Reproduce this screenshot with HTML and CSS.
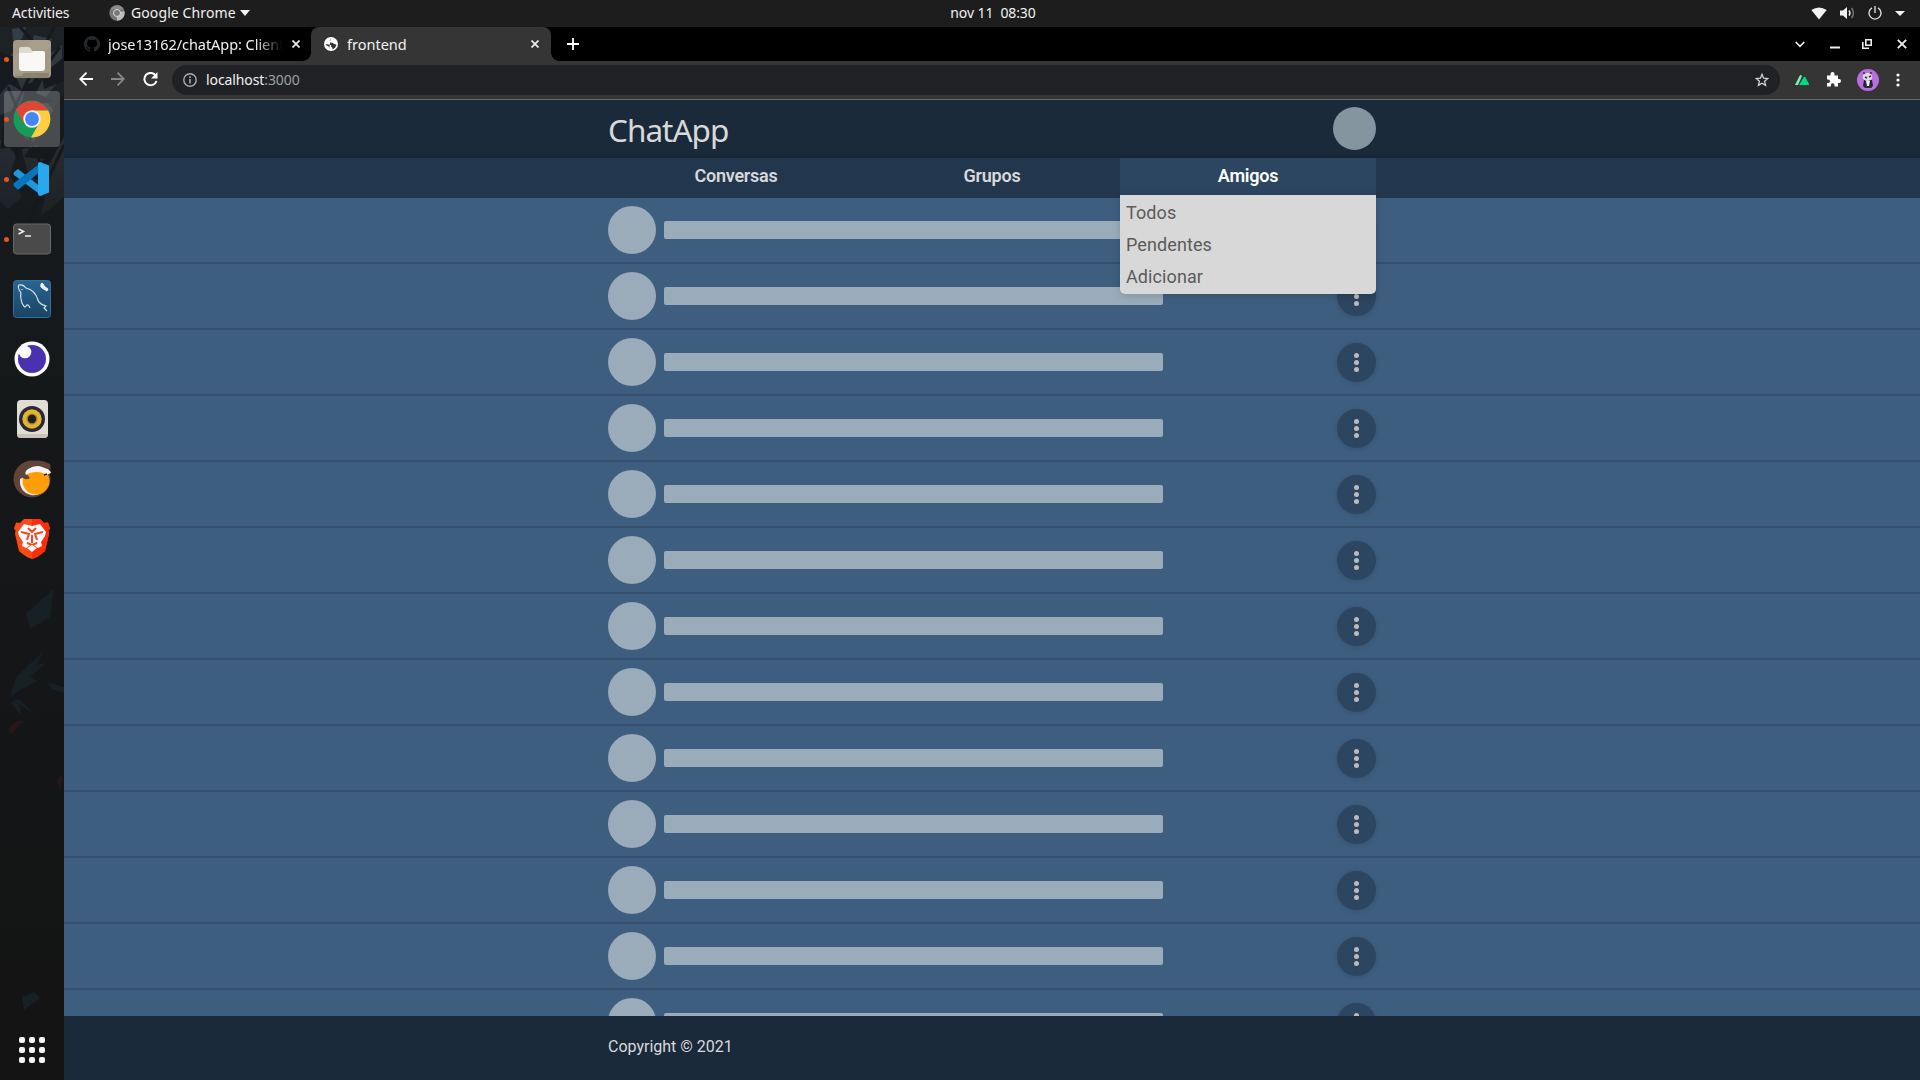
FILE: index.html
```html
<!DOCTYPE html>
<html lang="pt">
<head>
<meta charset="utf-8">
<title>frontend</title>
<link rel="stylesheet" href="styles.css">
</head>
<body>
<header class="panel">
  <span class="activities">Activities</span>
  <svg class="panel-app" width="16" height="16" viewBox="0 0 16 16"><circle cx="8" cy="8" r="7.7" fill="#777"/><path d="M8 8 15.3 6A7.7 7.7 0 0 1 8 15.7Z" fill="#bdbdbd"/><path d="M1.4 4.2A7.7 7.7 0 0 1 15 4.6H8Z" fill="#8c8c8c"/><circle cx="8" cy="8" r="3.5" fill="#777" stroke="#ddd"/></svg>
  <span class="app-name">Google Chrome</span>
  <svg class="app-arrow" width="10" height="6" viewBox="0 0 10 6"><path d="M0 0h10L5 6z" fill="#f2f2f2"/></svg>
  <span class="clock">nov 11&nbsp; 08:30</span>
  <div class="tray">
    <svg width="16" height="13" viewBox="0 0 16 13"><path d="M.3 3Q8-2 15.700 3L8 12.500Z" fill="#f2f2f2"/></svg>
    <svg width="15" height="14" viewBox="0 0 15 14"><path d="M0 4.500h3L7 1v12L3 9.500H0z" fill="#f2f2f2"/><path d="M9 4.500q2 2.500 0 5" fill="none" stroke="#f2f2f2" stroke-width="1.400"/><path d="M11.500 2q3.800 5 0 10" fill="none" stroke="#777" stroke-width="1.400"/></svg>
    <svg width="14" height="14" viewBox="0 0 14 14"><path d="M4 1.900a6 6 0 1 0 6 0M7 0v7" fill="none" stroke="#e6e6e6" stroke-width="1.300"/></svg>
    <svg width="10" height="5" viewBox="0 0 10 5"><path d="M0 0h10L5 5z" fill="#f2f2f2"/></svg>
  </div>
</header>
<div class="desktop">
  <aside class="dock">
    <svg class="wallpaper" width="64" height="1053" viewBox="0 0 64 1053">
      <defs><linearGradient id="shade" x1="0" y1="0" x2="0" y2="1"><stop offset="0" stop-color="#151719" stop-opacity="0"/><stop offset=".18" stop-color="#151719" stop-opacity=".75"/><stop offset=".4" stop-color="#141617" stop-opacity=".9"/><stop offset="1" stop-color="#141414"/></linearGradient></defs>
      <path fill="#1c2226" d="M0 0h64v1053H0z"/>
      <path fill="#343e46" d="M12 2l14-2-4 12-9 4zM34 8l18 4-6 18 16-12v32L44 72l12 14-20 16 22-2-8 30 14-22v62l-24 20 10-38-18 10L18 108l-12 8 10-34L0 88V66l18-16-14-8 8-16 14 10zM0 112l16 16-6 20 12 22-14 12-8-8z"/>
      <path fill="#171b1f" d="M0 24q14 10 24 0l-8 16 14 4-14 6 6 14-14-8-8 12zM64 30L42 48l2 14 20-8zM26 58l18-8-8 16 18 8-18 4-2 18-8-14-14 4 10-12zM4 94l14-8 0 12 14-2-8 14 14 10-16 2-4 14-6-16-12 2zM64 66L24 130l20 2-16 16 12 6 24-44z"/>
      <path stroke="#171b1f" stroke-width="3" fill="none" d="M54 0L2 106M60 20L32 58M8 60l34 80M64 118L28 196M20 0l20 22"/>
      <path fill="url(#shade)" d="M0 0h64v1053H0z"/>
      <path fill="#172024" d="M44 624L16 650l-6 20 12-8 16-8-8-4 16-14-10 2zM10 675l12 14-3-12 16 11-16-16zM64 660l-18-5 6 7 12 4zM26 586l28-24-4 28-20 12zM22 970l12-5 6 6-16 12z"/>
      <path fill="#281619" d="M8 703l8-9 7 0-11 13zM57 754l5-8-1 18z"/>
    </svg>
    <div class="apps">
      <div class="app running">
        <svg width="38" height="38" viewBox="0 0 38 38"><rect width="38" height="38" rx="4" fill="#a39a86"/><path d="M2 33h34v2q0 3-3 3H5q-3 0-3-3z" fill="#8b836f"/><path d="M18 0h16q4 0 4 4v2L8 36H4q-4 0-4-4V18z" fill="#aaa18d" opacity=".7"/><path d="M6 13V9q0-2 2-2h7q2 0 3 2l1 2h8v4H6z" fill="#e0dad0"/><path d="M6 13h12l3-2h9q2 0 2 2v15q0 3-3 3H9q-3 0-3-3z" fill="#f9f8f6"/></svg>
      </div>
      <div class="app running focused">
        <svg width="38" height="38" viewBox="0 0 38 38"><circle cx="19" cy="19" r="18.500" fill="#149d58"/><path d="M3 9.800A18.500 18.500 0 0 1 35 10.500H19L11 24z" fill="#de4638"/><path d="M19 10.500h16.200A18.500 18.500 0 0 1 18 37.500l8-14z" fill="#ffcd42"/><circle cx="19" cy="19" r="8.700" fill="#f1f1f1"/><circle cx="19" cy="19" r="6.900" fill="#4487f4"/></svg>
      </div>
      <div class="app running">
        <svg width="38" height="38" viewBox="0 0 38 38"><path d="M1 12l4-3 24 19v8L1 15q-1-2 0-3z" fill="#2196df"/><path d="M1 26l4 4 24-20V2L1 23q-1 2 0 3z" fill="#0875bd"/><path d="M27 2l9 3.500v27L27 36q-2 0-2-2V4q0-2 2-2z" fill="#29a8ef"/></svg>
      </div>
      <div class="app running">
        <svg width="38" height="32" viewBox="0 0 38 32"><rect x=".5" y="1" width="37" height="30" rx="3" fill="#4a4a4a" stroke="#696969"/><path d="M5.500 6l5 2.500-5 2.500M12 13h6" fill="none" stroke="#eee" stroke-width="1.500"/></svg>
      </div>
      <div class="app">
        <svg width="38" height="38" viewBox="0 0 38 38"><defs><linearGradient id="sea" x1="0" y1="0" x2="0" y2="1"><stop stop-color="#286692"/><stop offset="1" stop-color="#1b4363"/></linearGradient></defs><rect x=".5" y=".5" width="37" height="37" rx="3" fill="url(#sea)" stroke="#34719b"/><path d="M17 28q-2-5-4-2-1 3-4-3-2-6-1-10-4-6-2-8 4-1 7 3 9 2 12 12 1 4 8 6l-2 2 3 3M9 9v1" fill="none" stroke="#d4e4ee" stroke-width="1.200"/><path d="M28 4q-1 3 1 4l5 3 1-2-4-3q0-2-2-3z" fill="#e8eef2" stroke="#e8eef2"/></svg>
      </div>
      <div class="app">
        <svg width="38" height="38" viewBox="0 0 38 38"><circle cx="19" cy="19" r="17.500" fill="#fff"/><circle cx="19" cy="19" r="14" fill="#4a31b0"/><circle cx="12" cy="12" r="6.300" fill="#fff"/></svg>
      </div>
      <div class="app">
        <svg width="38" height="38" viewBox="0 0 38 38"><rect x="4" y="0" width="31" height="38" rx="4" fill="#e2ddd4"/><path d="M4 34h31q0 4-4 4H8q-4 0-4-4z" fill="#c8c2b8"/><circle cx="19" cy="19" r="13" fill="#28283a"/><circle cx="19" cy="19" r="9.700" fill="#e3b42c"/><circle cx="19" cy="19" r="5.500" fill="#a88324"/><circle cx="19" cy="19" r="4.200" fill="#1c1e25"/></svg>
      </div>
      <div class="app">
        <svg width="38" height="38" viewBox="0 0 38 38"><circle cx="19" cy="19" r="18.500" fill="#614439"/><path d="M11 17L7 19q-1 13 11 16 10 1 15-6z" fill="#eee"/><circle cx="23" cy="21" r="13.500" fill="#ff9d08"/><path d="M4 12Q20-6 37 4l1 8-11-3-14 4 4 5q-4 3-8-1z" fill="#614439"/><path d="M15 9q8-5 14-2l8 3 1 3-5 2q-3-3-9-3-7 0-11 3-2-3 2-6z" fill="#f4f4f4"/><path d="M36 9l2 2M31 15l3-1" stroke="#222" stroke-width="1.500"/></svg>
      </div>
      <div class="app">
        <svg width="36" height="40" viewBox="0 0 36 40"><path d="M10 0h16l4 4 4-.500 2 6-1.500 2L35 15l-4 17q-5 5-13 8-8-3-13-8L1 15l.500-3.500L0 9.500l2-6L6 4z" fill="#fb4a17"/><path d="M18 0h8l4 4 4-.500 2 6-1.500 2L35 15l-4 17q-5 5-13 8z" fill="#ff2c0a"/><path d="M10 5l8 2 8-2 6 8-1 4-4 6 1 4-4 2-6-4-6 4-4-2 1-4-4-6-1-4z" fill="#fff"/><path d="M7 13l8 2-2 6M29 13l-8 2 2 6M14 9l4 4 4-4M13 24l5 2 5-2M18 16v8" fill="none" stroke="#fa421d" stroke-width="2"/><path d="M18 26l5 3-5 4-5-4z" fill="#fff"/></svg>
      </div>
    </div>
    <svg class="launcher" width="26" height="26" viewBox="0 0 26 26" fill="#f4f4f4"><g id="dots"><rect width="6" height="6" rx="2"/><rect x="10" width="6" height="6" rx="2"/><rect x="20" width="6" height="6" rx="2"/></g><use href="#dots" y="10"/><use href="#dots" y="20"/></svg>
  </aside>
  <div class="browser">
    <div class="tabs">
      <div class="tab">
        <svg class="favicon" width="16" height="16" viewBox="0 0 16 16"><path fill="#24292e" d="M8 0C3.580 0 0 3.580 0 8c0 3.540 2.290 6.530 5.470 7.590.4.070.55-.17.55-.38v-1.490c-2.010.37-2.530-.49-2.690-.94-.09-.23-.48-.94-.82-1.130-.28-.15-.68-.52-.01-.53.63-.01 1.080.58 1.230.82.720 1.210 1.870.87 2.330.66.070-.52.280-.87.510-1.070-1.780-.2-3.640-.89-3.640-3.950 0-.87.310-1.590.82-2.150-.08-.2-.36-1.020.08-2.120 0 0 .67-.21 2.200.82a7.600 7.600 0 0 1 4 0c1.530-1.040 2.200-.82 2.200-.82.440 1.100.16 1.920.08 2.120.51.560.82 1.270.82 2.150 0 3.070-1.870 3.750-3.650 3.950.29.250.54.730.54 1.480v2.200c0 .21.150.46.550.38A8 8 0 0 0 8 0z"/></svg>
        <span class="tab-title title-long">jose13162/chatApp: Client</span>
        <svg class="close" width="8" height="8" viewBox="0 0 8 8"><path d="M.5.5l7 7m0-7l-7 7"/></svg>
      </div>
      <div class="tab active">
        <svg class="favicon" width="14" height="14" viewBox="0 0 14 14"><circle cx="7" cy="7" r="7" fill="#fff"/><path d="M7 1.500q-2 2-1 3.500h2q1 2 3 2 1 1 1.500 0Q12 11 8.500 12.500V11L7 9.500V8L1.500 7Q2 9 4 9l1 1v2.300" fill="#353535"/><path d="M7 1.500q3-1 4.500 2-2 .5-2 1.500L8 6 6 5z" fill="#fff"/></svg>
        <span class="tab-title title-short">frontend</span>
        <svg class="close" width="8" height="8" viewBox="0 0 8 8"><path d="M.5.5l7 7m0-7l-7 7"/></svg>
      </div>
      <svg class="plus" width="12" height="12" viewBox="0 0 12 12"><path d="M6 0v12M0 6h12" stroke="#fff" stroke-width="1.800"/></svg>
      <div class="window-controls">
        <svg width="10" height="7" viewBox="0 0 10 7"><path d="M.7 1L5 5.300 9.300 1" fill="none" stroke="#eee" stroke-width="1.700"/></svg>
        <svg width="10" height="10" viewBox="0 0 10 10"><path d="M0 8.500h10" stroke="#eee" stroke-width="2"/></svg>
        <svg width="10" height="10" viewBox="0 0 10 10"><path d="M3.800.8h5.400v5.400H3.800zM.8 3v6.200H7" fill="none" stroke="#eee" stroke-width="1.600"/></svg>
        <svg width="10" height="10" viewBox="0 0 10 10"><path d="M.8.8l8.400 8.400m0-8.400L.8 9.200" stroke="#eee" stroke-width="1.900"/></svg>
      </div>
    </div>
    <div class="toolbar">
      <div class="nav-buttons">
        <svg width="14" height="14" viewBox="0 0 14 14"><path d="M14 7H1.500M7.500.7L1.200 7l6.300 6.300" fill="none" stroke="#fff" stroke-width="1.800"/></svg>
        <svg width="14" height="14" viewBox="0 0 14 14"><path d="M0 7h12.500M6.500.7L12.800 7l-6.300 6.300" fill="none" stroke="#868686" stroke-width="1.800"/></svg>
        <svg width="15" height="15" viewBox="0 0 15 15"><path d="M12.800 3.700A6.200 6.200 0 1 0 13.500 9" fill="none" stroke="#fff" stroke-width="2"/><path d="M14.500 0v6.500H8z" fill="#fff"/></svg>
      </div>
      <div class="omnibox">
        <svg width="14" height="14" viewBox="0 0 14 14"><circle cx="7" cy="7" r="6.200" fill="none" stroke="#a9abae" stroke-width="1.400"/><path d="M7 6v4.500M7 3.300v1.600" stroke="#a9abae" stroke-width="1.600"/></svg>
        <span class="url">localhost<span class="port">:3000</span></span>
        <svg class="star" width="14" height="14" viewBox="0 0 14 14"><path d="M7 1.300l1.600 3.900 4.200.3-3.200 2.800 1 4.100L7 10.200l-3.600 2.200 1-4.100L1.200 5.500l4.200-.3z" fill="none" stroke="#d2d2d2" stroke-width="1.300"/></svg>
      </div>
      <div class="extensions">
        <svg width="14" height="10" viewBox="0 0 14 10"><path d="M0 10L4.500 1q1-2 2.500 0L3 10z" fill="#80eec0"/><path d="M4 10l4.500-7.500q1-1.500 2 0L14.500 10z" fill="#00dc82"/></svg>
        <svg width="15" height="15" viewBox="0 0 15 15"><path d="M1 3.500h3.500V2a2 2 0 0 1 4 0v1.500H12V7h1a2 2 0 0 1 0 4h-1v3.500H8.500V13a1.800 1.800 0 0 0-3.600 0v1.500H1V11h1.200a1.800 1.800 0 0 0 0-3.600H1z" fill="#fff"/></svg>
        <svg width="22" height="22" viewBox="0 0 22 22"><circle cx="11" cy="11" r="11" fill="#b96fe0"/><path d="M7 11h8l1 6-3 2H8l-2-2z" fill="#25222b"/><ellipse cx="10.500" cy="8" rx="4.800" ry="4" fill="#dedbe2"/><path d="M9 12h4l-1 5h-2z" fill="#eee"/><path d="M6 4h2M13 4h2M8 8l2 1M12 8l2-1M8 18h2M13 18h2" stroke="#37303e" stroke-width="1.700"/></svg>
        <svg width="4" height="14" viewBox="0 0 4 14" fill="#fff"><circle cx="2" cy="2" r="1.600"/><circle cx="2" cy="7" r="1.600"/><circle cx="2" cy="12" r="1.600"/></svg>
      </div>
    </div>
    <div class="page">
      <div class="masthead"><div class="container masthead-row"><h1>ChatApp</h1><div class="profile"></div></div></div>
      <nav class="menu"><div class="container menu-row">
        <div class="menu-item"><span class="conversas">Conversas</span></div>
        <div class="menu-item"><span>Grupos</span></div>
        <div class="menu-item open"><span>Amigos</span>
          <ul class="dropdown"><li>Todos</li><li>Pendentes</li><li>Adicionar</li></ul>
        </div>
      </div></nav>
      <main class="list">
        <div class="row"><div class="container entry"><i class="avatar"></i><i class="line"></i><b class="more"><i></i></b></div></div>
        <div class="row"><div class="container entry"><i class="avatar"></i><i class="line"></i><b class="more"><i></i></b></div></div>
        <div class="row"><div class="container entry"><i class="avatar"></i><i class="line"></i><b class="more"><i></i></b></div></div>
        <div class="row"><div class="container entry"><i class="avatar"></i><i class="line"></i><b class="more"><i></i></b></div></div>
        <div class="row"><div class="container entry"><i class="avatar"></i><i class="line"></i><b class="more"><i></i></b></div></div>
        <div class="row"><div class="container entry"><i class="avatar"></i><i class="line"></i><b class="more"><i></i></b></div></div>
        <div class="row"><div class="container entry"><i class="avatar"></i><i class="line"></i><b class="more"><i></i></b></div></div>
        <div class="row"><div class="container entry"><i class="avatar"></i><i class="line"></i><b class="more"><i></i></b></div></div>
        <div class="row"><div class="container entry"><i class="avatar"></i><i class="line"></i><b class="more"><i></i></b></div></div>
        <div class="row"><div class="container entry"><i class="avatar"></i><i class="line"></i><b class="more"><i></i></b></div></div>
        <div class="row"><div class="container entry"><i class="avatar"></i><i class="line"></i><b class="more"><i></i></b></div></div>
        <div class="row"><div class="container entry"><i class="avatar"></i><i class="line"></i><b class="more"><i></i></b></div></div>
        <div class="row"><div class="container entry"><i class="avatar"></i><i class="line"></i><b class="more"><i></i></b></div></div>
      </main>
      <footer class="footer"><div class="container"><span>Copyright © 2021</span></div></footer>
    </div>
  </div>
</div>
</body>
</html>
```
FILE: styles.css
```css
* { box-sizing: border-box; }
body { margin: 0; width: 1920px; height: 1080px; overflow: hidden; display: flex; flex-direction: column; background: #141414; color: #f2f2f2; font: 15px/20px "Noto Sans", sans-serif; }
svg { display: block; flex: none; }
span { white-space: nowrap; }

.panel { position: relative; height: 27px; flex: none; display: flex; align-items: center; padding: 0 15px 1px 12px; background: #1d1d1d; font-size: 14px; }
.activities { width: 97px; letter-spacing: -.1px; }
.app-name { width: 109px; margin-left: 6px; letter-spacing: .1px; }
.clock { position: absolute; left: 50%; top: 3px; transform: translateX(-50%); margin-left: 33px; letter-spacing: -.1px; }
.tray { margin-left: auto; display: flex; align-items: center; gap: 13px; }

.desktop { flex: 1; min-height: 0; display: flex; }
.dock { position: relative; width: 64px; flex: none; display: flex; flex-direction: column; justify-content: space-between; align-items: center; padding: 2px 0 17px; border-right: 1px solid #1c1e20; background: #161819; }
.wallpaper { position: absolute; inset: 0; }
.apps { position: relative; display: flex; flex-direction: column; gap: 4px; }
.app { position: relative; width: 56px; height: 56px; display: flex; align-items: center; justify-content: center; border-radius: 4px; }
.apps { padding-top: 2px; }
.focused { background: rgba(255, 255, 255, .22); }
.running::before { content: ""; position: absolute; left: 0; top: 26px; width: 5px; height: 5px; border-radius: 50%; background: #e95420; }
.launcher { position: relative; }

.browser { flex: 1; min-width: 0; display: flex; flex-direction: column; }
.tabs { height: 34px; flex: none; display: flex; align-items: center; background: #000; }
.tab { width: 247px; height: 34px; padding: 0 11px 0 20px; display: flex; align-items: center; }
.tab-title { overflow: hidden; font-size: 14.5px; }
.title-long { width: 176px; margin-left: 8px; letter-spacing: -.05px; -webkit-mask-image: linear-gradient(90deg, #000 84%, transparent 99%); mask-image: linear-gradient(90deg, #000 84%, transparent 99%); }
.title-short { margin-left: 9px; }
.close { margin-left: auto; stroke: #eee; stroke-width: 1.7; }
.tab.active { position: relative; width: 240px; padding: 0 12px 0 13px; background: #353535; border-radius: 8px 8px 0 0; }
.tab.active::before, .tab.active::after { content: ""; position: absolute; bottom: 0; width: 8px; height: 8px; }
.tab.active::before { left: -8px; background: radial-gradient(circle at 0 0, transparent 7.5px, #353535 8px); }
.tab.active::after { right: -8px; background: radial-gradient(circle at 100% 0, transparent 7.500px, #353535 8px); }
.plus { margin-left: 16px; }
.window-controls { margin-left: auto; padding-right: 13px; display: flex; align-items: center; gap: 25px; }
.window-controls svg:nth-child(2) { margin-right: -3px; }

.toolbar { height: 39px; flex: none; display: flex; align-items: center; padding: 0 20px 1px 15px; background: #353535; border-bottom: 1px solid #696969; }
.nav-buttons { width: 93px; display: flex; gap: 18px; }
.omnibox { width: 1608px; height: 30px; display: flex; align-items: center; padding: 0 11px; border-radius: 15px; background: #202124; }
.url { margin-left: 9px; font-size: 14px; letter-spacing: -.1px; }
.port { color: #9aa0a6; }
.star { margin-left: auto; }
.extensions { flex: 1; display: flex; align-items: center; justify-content: space-between; padding-left: 15px; }

.page { flex: 1; min-height: 0; display: flex; flex-direction: column; font-family: Roboto, sans-serif; background: #3e5e80; }
.container { width: 768px; margin: 0 auto; }
.masthead { height: 58px; flex: none; background: linear-gradient(#1a2a3b 53px, #172636); }
.masthead-row { height: 58px; display: flex; justify-content: space-between; align-items: flex-start; }
h1 { margin: 8px 0 0; color: #d9d9d9; font: 400 31.5px/44px "Noto Sans", sans-serif; letter-spacing: -1px; }
.profile { width: 43px; height: 43px; margin-top: 7px; border-radius: 50%; background: #8595a0; }
.menu { height: 40px; flex: none; background: #22374e; }
.menu-row { display: grid; grid-template-columns: repeat(3, 1fr); }
.menu-item { position: relative; height: 37px; text-align: center; font-size: 18px; line-height: 36px; font-weight: 600; letter-spacing: -.25px; color: #d9d9d9; }
.menu-item.open { background: #2c4560; color: #fff; }
.dropdown { position: absolute; z-index: 2; top: 37px; left: 0; width: 256px; height: 99px; margin: 0; padding: 1px 6px; list-style: none; text-align: left; font-size: 18px; font-weight: 400; letter-spacing: .1px; color: #5b5b5b; background: #d8d8d8; border-radius: 0 0 5px 5px; box-shadow: 0 2px 8px rgba(0, 0, 0, .15); }
.dropdown li { height: 32px; line-height: 33px; }
.list { flex: 1; min-height: 0; overflow: hidden; }
.row { height: 66px; border-bottom: 2px solid #34506e; }
.entry { height: 64px; display: flex; align-items: center; }
.avatar { width: 48px; height: 48px; border-radius: 50%; background: #9aacba; }
.line { width: 499px; height: 18px; margin-left: 8px; border-radius: 2px; background: #9aacba; }
.more { width: 39px; height: 39px; margin-left: auto; display: flex; align-items: center; justify-content: center; border-radius: 50%; background: #2c4560; box-shadow: 0 1px 5px rgba(0, 0, 0, .15); }
.more i { width: 5px; height: 5px; border-radius: 50%; background: #bfb9b8; box-shadow: 0 -7px #bfb9b8, 0 7px #bfb9b8; }
.footer { height: 64px; flex: none; background: #1a2a3b; color: #d9d9d9; font-size: 16px; line-height: 62px; }
```
